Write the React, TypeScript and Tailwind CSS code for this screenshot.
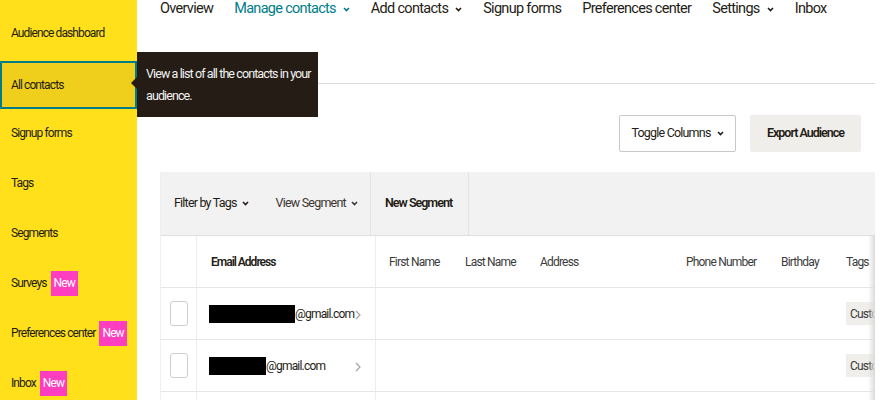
import React from "react";

const FONT = 'Roboto, "Liberation Sans", sans-serif';

function Caret({ className = "" }: { className?: string }) {
  return (
    <svg width="7" height="5" viewBox="0 0 7 5" className={className} fill="none">
      <path d="M1 1l2.5 2.5L6 1" stroke="currentColor" strokeWidth="1.6" />
    </svg>
  );
}

function RowChevron() {
  return (
    <svg width="6" height="10" viewBox="0 0 6 10" fill="none" className="text-[#a3a3a3]">
      <path d="M1 1l4 4-4 4" stroke="currentColor" strokeWidth="1.2" />
    </svg>
  );
}

const sideItems = [
  { label: "Audience dashboard" },
  { label: "All contacts", active: true },
  { label: "Signup forms" },
  { label: "Tags" },
  { label: "Segments" },
  { label: "Surveys", isNew: true },
  { label: "Preferences center", isNew: true },
  { label: "Inbox", isNew: true },
];

const navItems = [
  { label: "Overview" },
  { label: "Manage contacts", menu: true, current: true },
  { label: "Add contacts", menu: true },
  { label: "Signup forms" },
  { label: "Preferences center" },
  { label: "Settings", menu: true },
  { label: "Inbox" },
];

const columns = ["First Name", "Last Name", "Address", "Phone Number", "Birthday", "Tags"];

const contacts = [
  { hidden: 86, domain: "@gmail.com" },
  { hidden: 57, domain: "@gmail.com" },
];

const grid = "grid grid-cols-[36px_179px_76px_75px_146px_95px_65px_1fr]";

export default function App() {
  return (
    <div
      className="relative flex h-[400px] w-[880px] overflow-hidden bg-white text-[#241c15]"
      style={{ fontFamily: FONT }}
    >
      {/* Audience sidebar */}
      <aside className="w-[137px] shrink-0 bg-[#ffe01b] pt-[8px] text-[12px] tracking-[-0.9px] whitespace-nowrap">
        {sideItems.map((item) =>
          item.active ? (
            <div
              key={item.label}
              className="mt-[3px] mb-[-1px] flex h-[48px] items-center border-2 border-[#007c89] bg-[#efcf1c] pl-[9px]"
            >
              {item.label}
            </div>
          ) : (
            <div key={item.label} className="flex h-[50px] items-center pl-[11px]">
              <span>{item.label}</span>
              {item.isNew && (
                <span className="ml-[4px] flex h-[25px] items-center bg-[#ff3ebf] px-[3px] text-white">
                  New
                </span>
              )}
            </div>
          )
        )}
      </aside>

      <main className="flex min-w-0 flex-1 flex-col pr-[5px] pl-[23px]">
        {/* Top navigation */}
        <div className="h-[84px] border-b border-[#dcdcdc]">
          <nav className="flex h-[17px] items-center gap-[21px] text-[14.5px] tracking-[-0.7px] whitespace-nowrap">
            {navItems.map((n) => (
              <span
                key={n.label}
                className={`flex items-center gap-[7px] ${n.current ? "text-[#007c89]" : ""}`}
              >
                {n.label}
                {n.menu && <Caret className="mt-[1px]" />}
              </span>
            ))}
          </nav>
        </div>

        {/* Audience actions */}
        <div className="mt-[31px] flex justify-end gap-[14px] pr-[14px] text-[12.5px] tracking-[-0.8px]">
          <button className="flex h-[37px] w-[117px] items-center justify-center gap-[6px] rounded-[2px] border border-[#c9c9c9] bg-white">
            Toggle Columns
            <Caret />
          </button>
          <button className="flex h-[37px] w-[111px] items-center justify-center rounded-[2px] bg-[#efeeea] font-semibold tracking-[-1px]">
            Export Audience
          </button>
        </div>

        {/* Contacts table */}
        <div className="relative mt-[20px] flex-1 overflow-hidden border-l border-[#efefef]">
          <div className="flex h-[64px] items-center border-b border-[#dedede] bg-[#f2f2f2] text-[12.5px] tracking-[-0.8px] whitespace-nowrap">
            <div className="flex h-full w-[209px] items-center gap-[27px] pl-[13px]">
              <span className="flex items-center gap-[5px]">
                Filter by Tags <Caret />
              </span>
              <span className="flex items-center gap-[5px] text-[#3d3631]">
                View Segment <Caret />
              </span>
            </div>
            <div className="flex h-full w-[99px] items-center border-x border-[#e4e4e4] pl-[14px] font-semibold tracking-[-1px]">
              New Segment
            </div>
          </div>

          <div className={`${grid} h-[52px] border-b border-[#e6e6e6] text-[12px] tracking-[-0.8px]`}>
            <div className="border-r border-[#ededed]" />
            <div className="flex items-center border-r border-[#ededed] pl-[14px] font-semibold tracking-[-1px]">
              Email Address
            </div>
            {columns.map((c) => (
              <div key={c} className="flex items-center overflow-hidden whitespace-nowrap pl-[13px] text-[#3b3b3b]">
                {c}
              </div>
            ))}
          </div>

          {contacts.map((c, i) => (
            <div key={i} className={`${grid} h-[52px] border-b border-[#e6e6e6] text-[12px] tracking-[-0.8px]`}>
              <div className="flex items-center justify-center border-r border-[#ededed]">
                <span className="h-[25px] w-[18px] rounded-[3px] border border-[#cfcfcf] bg-white" />
              </div>
              <div className="flex items-center border-r border-[#ededed] pr-[14px] pl-[12px]">
                <span className="h-[18px] bg-black" style={{ width: c.hidden }} />
                <span>{c.domain}</span>
                <span className="ml-auto pt-[3px]">
                  <RowChevron />
                </span>
              </div>
              <div />
              <div />
              <div />
              <div />
              <div />
              <div className="flex items-center overflow-hidden pl-[13px]">
                <span className="flex h-[23px] items-center whitespace-nowrap bg-[#efeeea] px-[4px] text-[#3b3b3b]">
                  Customer
                </span>
              </div>
            </div>
          ))}
          <div className={`${grid} h-[20px]`}>
            <div className="border-r border-[#ededed]" />
            <div className="border-r border-[#ededed]" />
          </div>

          {/* horizontal scroll shadow */}
          <div className="pointer-events-none absolute top-[64px] right-0 bottom-0 w-[7px] bg-gradient-to-l from-[#dcdcdc] to-transparent" />
        </div>
      </main>

      {/* Sidebar tooltip */}
      <div className="absolute top-[52px] left-[137px] h-[65px] w-[181px] bg-[#241c15] pt-[11px] pl-[9px] text-[12.5px] leading-[22px] tracking-[-0.9px] whitespace-nowrap text-[#f2f2f2]">
        <span className="absolute top-[25px] -left-[6px] border-y-[6px] border-r-[6px] border-y-transparent border-r-[#241c15]" />
        View a list of all the contacts in your
        <br />
        audience.
      </div>
    </div>
  );
}
